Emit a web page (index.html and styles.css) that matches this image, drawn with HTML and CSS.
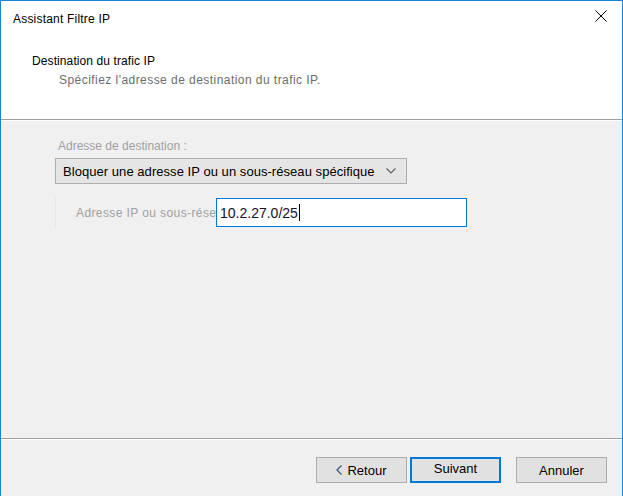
FILE: index.html
```html
<!DOCTYPE html>
<html lang="fr">
<head>
  <meta charset="UTF-8">
  <title>Assistant Filtre IP</title>
  <link rel="stylesheet" href="styles.css">
</head>
<body>
  <div class="window">
    <div class="titlebar">
      <span class="title">Assistant Filtre IP</span>
      <span class="close">
        <svg width="12" height="12" viewBox="0 0 12 12"><path d="M0.5 0.5 L11.5 11.5 M11.5 0.5 L0.5 11.5" stroke="#000" stroke-width="1" fill="none"/></svg>
      </span>
    </div>

    <div class="header">
      <div class="heading">Destination du trafic IP</div>
      <div class="subheading">Spécifiez l'adresse de destination du trafic IP.</div>
    </div>

    <div class="content">
      <div class="label muted">Adresse de destination :</div>
      <div class="combo">
        <span>Bloquer une adresse IP ou un sous-réseau spécifique</span>
        <svg class="chevron" width="10" height="6" viewBox="0 0 10 6"><path d="M0.5 0.5 L5 5 L9.5 0.5" stroke="#606060" stroke-width="1.2" fill="none"/></svg>
      </div>
      <div class="group">
        <span class="muted field-label">Adresse IP ou sous-rése</span>
        <div class="textbox">10.2.27.0/25<span class="caret"></span></div>
      </div>
    </div>

    <div class="footer">
      <button class="btn">
        <svg class="back" width="6" height="10" viewBox="0 0 6 10"><path d="M5.5 0.5 L1 5 L5.5 9.5" stroke="#3c5a7a" stroke-width="1.3" fill="none"/></svg>
        Retour
      </button>
      <button class="btn focused">Suivant</button>
      <button class="btn cancel">Annuler</button>
    </div>
  </div>
</body>
</html>
```

FILE: styles.css
```css
body {
  margin: 0;
  font-family: 'Liberation Sans', Arial, sans-serif;
  font-size: 12px;
  color: #000;
  background: #f0f0f0;
}

.window {
  width: 623px;
  height: 496px;
  box-sizing: border-box;
  border: 1px solid #1883d7;
  border-bottom: none;
  display: flex;
  flex-direction: column;
  overflow: hidden;
}

.titlebar {
  height: 31px;
  flex: none;
  background: #fff;
  display: flex;
  align-items: center;
  justify-content: space-between;
  padding: 5px 15px 0 12px;
  box-sizing: border-box;
}

.title {
  font-size: 12px;
  letter-spacing: 0.2px;
}

.close {
  display: flex;
  margin-top: -7px;
}

/* white header band with the page title */
.header {
  flex: none;
  background: #fff;
  height: 88px;
  padding: 22px 0 0 31px;
  box-sizing: border-box;
  border-bottom: 1px solid #a0a0a0;
  box-shadow: 0 1px 0 #fff;
}

.heading {
  font-size: 12px;
  line-height: 14px;
  letter-spacing: 0.1px;
}

.subheading {
  font-size: 12px;
  line-height: 14px;
  color: #6d6d6d;
  letter-spacing: 0.45px;
  margin: 5px 0 0 27px;
}

.content {
  flex: 1;
  padding: 19px 0 0 54px;
  border-bottom: 1px solid #a0a0a0;
  box-shadow: 0 1px 0 #fff;
}

.muted {
  color: #a0a0a0;
}

.label {
  margin-left: 3px;
  line-height: 14px;
  height: 14px;
}

.combo {
  width: 352px;
  height: 26px;
  margin-top: 5px;
  box-sizing: border-box;
  background: #e5e5e5;
  border: 1px solid #adadad;
  display: flex;
  align-items: center;
  justify-content: space-between;
  padding: 0 10px 0 7px;
  font-size: 13px;
  letter-spacing: 0.05px;
  white-space: nowrap;
}

.chevron {
  flex: none;
}

.group {
  display: flex;
  align-items: center;
  margin-top: 13px;
  padding-left: 20px;
  height: 31px;
  border-left: 1px solid #e8e8e8;
}

.field-label {
  font-size: 12px;
  letter-spacing: 0.4px;
  width: 140px;
  flex: none;
  white-space: nowrap;
}

.textbox {
  width: 251px;
  height: 29px;
  box-sizing: border-box;
  background: #fff;
  border: 1px solid #0078d7;
  padding: 0 0 0 3px;
  display: flex;
  align-items: center;
  font-size: 14px;
  color: #101030;
}

.caret {
  display: inline-block;
  width: 1px;
  height: 17px;
  background: #000;
  margin-left: 1px;
}

.footer {
  height: 57px;
  flex: none;
  display: flex;
  align-items: flex-start;
  justify-content: flex-end;
  padding: 18px 15px 0 0;
  box-sizing: border-box;
}

.btn {
  width: 91px;
  height: 26px;
  margin-left: 3px;
  background: #e1e1e1;
  border: 1px solid #adadad;
  font-family: inherit;
  font-size: 13px;
  color: #000;
  padding: 0;
  display: flex;
  align-items: center;
  justify-content: center;
}

.btn.focused {
  border: 2px solid #0078d7;
  padding-bottom: 3px;
}

.btn.cancel {
  margin-left: 15px;
}

.back {
  margin-right: 5px;
}
```
